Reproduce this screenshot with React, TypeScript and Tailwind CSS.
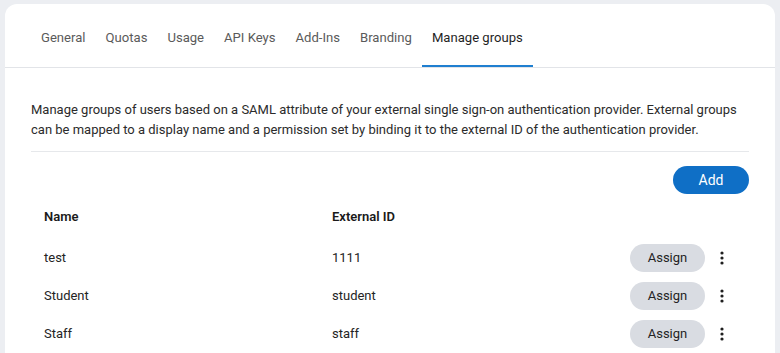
import React from 'react';

const tabs = ['General', 'Quotas', 'Usage', 'API Keys', 'Add-Ins', 'Branding', 'Manage groups'];

const groups = [
    { name: 'test', externalId: '1111' },
    { name: 'Student', externalId: 'student' },
    { name: 'Staff', externalId: 'staff' },
];

const Kebab: React.FC = () => (
    <svg width="4" height="14" viewBox="0 0 4 14" className="text-[#1f1f1f]">
        <circle cx="2" cy="2" r="1.6" fill="currentColor" />
        <circle cx="2" cy="7" r="1.6" fill="currentColor" />
        <circle cx="2" cy="12" r="1.6" fill="currentColor" />
    </svg>
);

export default function App() {
    const active = 'Manage groups';

    return (
        <div className="min-h-screen bg-[#eceef2] pt-[4px] px-[5px] font-['Roboto',sans-serif] text-[13px] text-[#242424]">
            <div className="bg-white rounded-t-[12px] h-[349px] overflow-hidden">
                {/* Tabs */}
                <nav className="flex h-[64px] items-stretch border-b border-[#e2e4e8] pl-[26px] pt-[6px]">
                    {tabs.map((tab) => (
                        <div
                            key={tab}
                            className={`flex items-center px-[10px] border-b-2 text-[13.1px] ${
                                tab === active ? 'border-[#1f7fd0] text-[#1f1f1f]' : 'border-transparent text-[#5a5a5a]'
                            }`}
                        >
                            {tab}
                        </div>
                    ))}
                </nav>

                {/* Content */}
                <div className="px-[26px] pt-[32px]">
                    <p className="leading-[20px] text-[#2b2b2b] pb-[11px] border-b border-[#e6e8eb]">
                        Manage groups of users based on a SAML attribute of your external single sign-on authentication
                        provider. External groups can be mapped to a display name and a permission set by binding it to
                        the external ID of the authentication provider.
                    </p>

                    <div className="flex justify-end pt-[14px]">
                        <button className="w-[76px] h-[28px] rounded-full bg-[#0f6fc6] text-white text-[14px]">Add</button>
                    </div>

                    <div className="flex items-center h-[45px] pl-[13px] font-semibold text-[#1a1a1a]">
                        <div className="w-[288px]">Name</div>
                        <div>External ID</div>
                    </div>

                    {groups.map((g) => (
                        <div key={g.name} className="flex items-center h-[38px] pl-[13px] pr-[10px]">
                            <div className="w-[288px]">{g.name}</div>
                            <div className="flex-1">{g.externalId}</div>
                            <button className="w-[75px] h-[28px] rounded-full bg-[#d9dce2] text-[#242424]">Assign</button>
                            <div className="w-[34px] flex justify-center">
                                <Kebab />
                            </div>
                        </div>
                    ))}
                </div>
            </div>
        </div>
    );
}
